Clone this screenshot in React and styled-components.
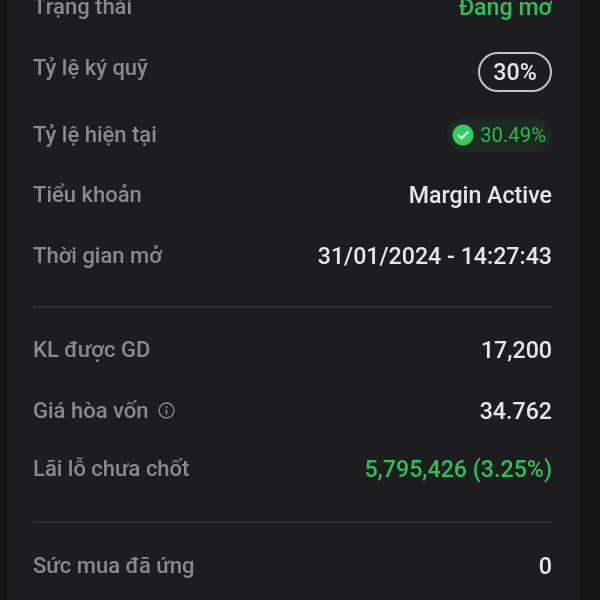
import React from 'react';
import styled, { createGlobalStyle } from 'styled-components';

const Global = createGlobalStyle`
  html, body { margin: 0; padding: 0; width: 600px; height: 600px; overflow: hidden; background: #141415; }
  #root { width: 600px; height: 600px; overflow: hidden; }
`;
const Panel = styled.div`
  box-sizing: border-box;
  width: 573px;
  height: 640px;
  margin-left: 7px;
  margin-top: -20px;
  padding: 0 28px 0 26px;
  background: #1d1d1f;
  font-family: Roboto, "Noto Sans", sans-serif;
  font-weight: 500;
  font-size: 23.2px;
  display: flex;
  flex-direction: column;
  filter: blur(0.45px);
`;
const Row = styled.div`
  display: flex;
  justify-content: space-between;
  align-items: center;
  height: ${p => p.$h}px;
`;
const Label = styled.span`
  color: #8a8a8e;
  display: inline-flex;
  align-items: center;
  gap: 10px;
  font-size: 22px;
  position: relative;
  top: ${p => p.$up || -1}px;
`;
const Value = styled.span`
  color: ${p => (p.$green ? '#2fbf58' : '#e6e6e8')};
`;
const Pill = styled.span`
  box-sizing: border-box;
  width: 74px;
  height: 40px;
  border: 2px solid #c4c4c6;
  border-radius: 20px;
  color: #e6e6e8;
  display: flex;
  align-items: center;
  justify-content: center;
`;
const Badge = styled.span`
  height: 34px;
  padding: 0 6px 0 5px;
  border-radius: 17px;
  background: #1d2a21;
  color: #2fb655;
  font-size: 20.3px;
  font-weight: 400;
  display: flex;
  align-items: center;
  gap: 6px;
`;
const Divider = styled.div`
  height: 2px;
  background: #2f2f31;
`;

const Check = () => (
  <svg width="22" height="22" viewBox="0 0 22 22">
    <circle cx="11" cy="11" r="10.5" fill="#31cf5f" />
    <path d="M6.5 11.3 9.7 14.3 15.6 8.2" fill="none" stroke="#e9f7ec" strokeWidth="2.2" strokeLinecap="round" strokeLinejoin="round" />
  </svg>
);
const Info = () => (
  <svg width="17" height="17" viewBox="0 0 17 17">
    <circle cx="8.5" cy="8.5" r="7.5" fill="none" stroke="#8a8a8e" strokeWidth="1.3" />
    <path d="M8.5 7.5V12.5" stroke="#8a8a8e" strokeWidth="1.6" />
    <circle cx="8.5" cy="5" r="1" fill="#8a8a8e" />
  </svg>
);

export default function App() {
  return (
    <>
      <Global />
      <Panel>
        <Row $h={54}>
          <Label>Trạng thái</Label>
          <Value $green>Đang mở</Value>
        </Row>
        <Row $h={76}>
          <Label $up={-5}>Tỷ lệ ký quỹ</Label>
          <Pill>30%</Pill>
        </Row>
        <Row $h={50}>
          <Label>Tỷ lệ hiện tại</Label>
          <Badge><Check />30.49%</Badge>
        </Row>
        <Row $h={70}>
          <Label>Tiểu khoản</Label>
          <Value>Margin Active</Value>
        </Row>
        <Row $h={52}>
          <Label>Thời gian mở</Label>
          <Value>31/01/2024 - 14:27:43</Value>
        </Row>
        <Row $h={24} />
        <Divider />
        <Row $h={84}>
          <Label>KL được GD</Label>
          <Value>17,200</Value>
        </Row>
        <Row $h={38}>
          <Label>Giá hòa vốn <Info /></Label>
          <Value>34.762</Value>
        </Row>
        <Row $h={78}>
          <Label>Lãi lỗ chưa chốt</Label>
          <Value $green>5,795,426 (3.25%)</Value>
        </Row>
        <Row $h={13} />
        <Divider />
        <Row $h={86}>
          <Label>Sức mua đã ứng</Label>
          <Value>0</Value>
        </Row>
      </Panel>
    </>
  );
}
